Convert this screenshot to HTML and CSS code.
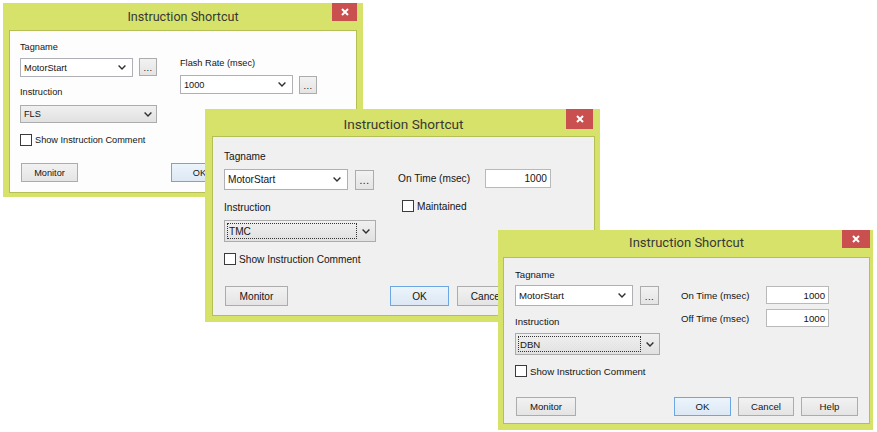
FILE: index.html
```html
<!DOCTYPE html>
<html lang="en">
<head>
<meta charset="utf-8">
<title>Instruction Shortcut dialogs</title>
<link rel="stylesheet" href="styles.css">
</head>
<body>
<div class="desk">

  <section class="dlg d1">
    <header class="tbar">
      <h1 class="ttl">Instruction Shortcut</h1>
      <button class="close" aria-label="Close"><svg viewBox="0 0 10 10"><path d="M2 2L8 8M8 2L2 8"/></svg></button>
    </header>
    <div class="client">
      <div class="top">
        <div class="col col-l">
          <div class="lbl">Tagname</div>
          <div class="row">
            <div class="combo tag"><span class="val">MotorStart</span><svg class="chev" viewBox="0 0 8 5"><path d="M0.6 0.6L4 4L7.4 0.6"/></svg></div>
            <button class="btn dots">...</button>
          </div>
          <div class="lbl lbl-ins">Instruction</div>
          <div class="combo list"><span class="val">FLS</span><span class="arr"><svg class="chev" viewBox="0 0 8 5"><path d="M0.6 0.6L4 4L7.4 0.6"/></svg></span></div>
        </div>
        <div class="col col-r">
          <div class="lbl">Flash Rate (msec)</div>
          <div class="row">
            <div class="combo tag"><span class="val">1000</span><svg class="chev" viewBox="0 0 8 5"><path d="M0.6 0.6L4 4L7.4 0.6"/></svg></div>
            <button class="btn dots">...</button>
          </div>
        </div>
      </div>
      <label class="chk"><span class="box"></span>Show Instruction Comment</label>
      <div class="btns">
        <button class="btn mon">Monitor</button>
        <button class="btn def">OK</button>
      </div>
    </div>
  </section>

  <section class="dlg d2">
    <header class="tbar">
      <h1 class="ttl">Instruction Shortcut</h1>
      <button class="close" aria-label="Close"><svg viewBox="0 0 10 10"><path d="M2 2L8 8M8 2L2 8"/></svg></button>
    </header>
    <div class="client">
      <div class="top">
        <div class="col col-l">
          <div class="lbl">Tagname</div>
          <div class="row">
            <div class="combo tag"><span class="val">MotorStart</span><svg class="chev" viewBox="0 0 8 5"><path d="M0.6 0.6L4 4L7.4 0.6"/></svg></div>
            <button class="btn dots">...</button>
          </div>
          <div class="lbl lbl-ins">Instruction</div>
          <div class="combo list focus"><span class="val">TMC</span><span class="arr"><svg class="chev" viewBox="0 0 8 5"><path d="M0.6 0.6L4 4L7.4 0.6"/></svg></span></div>
        </div>
        <div class="col col-r">
          <div class="fld"><span class="flbl">On Time (msec)</span><span class="inp">1000</span></div>
          <label class="chk maint"><span class="box"></span>Maintained</label>
        </div>
      </div>
      <label class="chk"><span class="box"></span>Show Instruction Comment</label>
      <div class="btns">
        <button class="btn mon">Monitor</button>
        <button class="btn def">OK</button>
        <button class="btn">Cancel</button>
      </div>
    </div>
  </section>

  <section class="dlg d3">
    <header class="tbar">
      <h1 class="ttl">Instruction Shortcut</h1>
      <button class="close" aria-label="Close"><svg viewBox="0 0 10 10"><path d="M2 2L8 8M8 2L2 8"/></svg></button>
    </header>
    <div class="client">
      <div class="top">
        <div class="col col-l">
          <div class="lbl">Tagname</div>
          <div class="row">
            <div class="combo tag"><span class="val">MotorStart</span><svg class="chev" viewBox="0 0 8 5"><path d="M0.6 0.6L4 4L7.4 0.6"/></svg></div>
            <button class="btn dots">...</button>
          </div>
          <div class="lbl lbl-ins">Instruction</div>
          <div class="combo list focus"><span class="val">DBN</span><span class="arr"><svg class="chev" viewBox="0 0 8 5"><path d="M0.6 0.6L4 4L7.4 0.6"/></svg></span></div>
        </div>
        <div class="col col-r">
          <div class="fld"><span class="flbl">On Time (msec)</span><span class="inp">1000</span></div>
          <div class="fld"><span class="flbl">Off Time (msec)</span><span class="inp">1000</span></div>
        </div>
      </div>
      <label class="chk"><span class="box"></span>Show Instruction Comment</label>
      <div class="btns">
        <button class="btn mon">Monitor</button>
        <button class="btn def">OK</button>
        <button class="btn">Cancel</button>
        <button class="btn">Help</button>
      </div>
    </div>
  </section>

</div>
</body>
</html>
```

FILE: styles.css
```css
* { box-sizing: border-box; }

html, body {
  margin: 0;
  background: #ffffff;
}

body {
  width: 877px;
  height: 432px;
  overflow: hidden;
  font-family: "Liberation Sans", Arial, sans-serif;
  color: #141414;
}

.desk {
  position: relative;
  width: 877px;
  height: 432px;
}

/* ---------- window frame ---------- */
.dlg {
  position: absolute;
  display: flex;
  flex-direction: column;
  background: #d7e26a;
  font-size: var(--fs);
}

.d1 { left: 3px;   top: 3px;   width: 360px; height: 194px; padding: 0 6px 4px 6px; --fs: 9.2px; z-index: 1; }
.d2 { left: 205px; top: 109px; width: 395px; height: 213px; padding: 0 5px 6px 7px; --fs: 10.15px; z-index: 2; }
.d3 { left: 498px; top: 230px; width: 375px; height: 200px; padding: 0 3px 6px 5px; --fs: 9.65px; z-index: 3; }

.tbar {
  height: 27px;
  flex: none;
  display: grid;
  grid-template-columns: 1fr auto 1fr;
  align-items: start;
}

.ttl {
  grid-column: 2;
  margin: 0;
  font-family: Roboto, "Noto Sans", sans-serif;
  font-weight: 400;
  line-height: 27px;
  color: #383838;
  white-space: nowrap;
}
.d1 .ttl { font-size: 12.6px; }
.d2 .ttl { font-size: 13.6px; margin-top: 2px; }
.d3 .ttl { font-size: 13px; line-height: 25px; }

.close {
  grid-column: 3;
  justify-self: end;
  padding: 0;
  border: 0;
  background: #c9504f;
  display: flex;
  align-items: center;
  justify-content: center;
}
.close svg { width: 10px; height: 10px; }
.close path { stroke: #ffffff; stroke-width: 2; fill: none; }
.d1 .close { width: 25px; height: 18px; }
.d2 .close { width: 27px; height: 20px; margin-right: 2px; }
.d3 .close { width: 28px; height: 18px; }

/* ---------- client area ---------- */
.client {
  flex: 1;
  display: flex;
  flex-direction: column;
  align-items: flex-start;
  border: 1px solid #b4bf55;
  background: #f0f0f0;
}
.d1 .client { background: #fdfdfd; padding: 10px 0 0 10px; }
.d2 .client { padding: 13px 11px 0 11px; }
.d3 .client { padding: 10px 11px 0 11px; }

.top { display: flex; align-items: flex-start; }
.col { display: flex; flex-direction: column; align-items: flex-start; }

.lbl { white-space: nowrap; }
.d1 .lbl { line-height: 13px; height: 13px; }
.d2 .lbl { line-height: 14px; height: 14px; }
.d3 .lbl { line-height: 13px; height: 13px; }

.row { display: flex; align-items: flex-start; }

/* combo boxes */
.combo {
  display: flex;
  align-items: center;
  white-space: nowrap;
}
.chev { width: 8px; height: 5px; flex: none; }
.chev path { fill: none; stroke: #303030; stroke-width: 1.4; }

.tag {
  justify-content: space-between;
  background: #ffffff;
  border: 1px solid #aeb0b6;
  padding: 0 6px 0 3px;
}

.list {
  align-items: stretch;
  background: linear-gradient(#f0f0f0, #e1e1e1);
  border: 1px solid #acacac;
}
.list .val {
  flex: 1;
  display: flex;
  align-items: center;
  padding-left: 3px;
}
.list.focus .val {
  margin: 2px 0 2px 2px;
  padding-left: 1px;
  border: 1px dotted #333333;
}
.list .arr {
  width: 18px;
  flex: none;
  display: flex;
  align-items: center;
  justify-content: center;
}

/* buttons */
.btn {
  font: inherit;
  color: #141414;
  padding: 0;
  border: 1px solid #acacac;
  background: linear-gradient(#f2f2f2, #e4e4e4);
  display: flex;
  align-items: center;
  justify-content: center;
  flex: none;
}
.btn.def {
  border-color: #6aa7e3;
  background: linear-gradient(#ecf4fc, #dce8f4);
}
.dots { line-height: 1; padding-top: 3px; letter-spacing: 0.5px; }

/* checkbox */
.chk {
  display: flex;
  align-items: center;
  gap: 3px;
  white-space: nowrap;
  height: 12px;
}
.box {
  width: 12px;
  height: 12px;
  flex: none;
  border: 1px solid #3a3a3a;
  background: #ffffff;
}

/* text fields */
.fld { display: grid; align-items: center; }
.flbl { white-space: nowrap; }
.inp {
  background: #ffffff;
  border: 1px solid #b9b9b9;
  text-align: right;
  padding-right: 3px;
  display: flex;
  align-items: center;
  justify-content: flex-end;
}

.btns { display: flex; align-items: flex-start; }
.btns .mon { margin-right: auto; }

/* ---------- dialog 1 metrics ---------- */
.d1 .row { margin-top: 4px; gap: 6px; }
.d1 .tag { width: 113px; height: 19px; }
.d1 .dots { width: 18px; height: 18px; }
.d1 .lbl-ins { margin-top: 9px; }
.d1 .list { margin-top: 6px; width: 137px; height: 18px; }
.d1 .list .arr { width: 16px; }
.d1 .col-r { margin-left: 23px; margin-top: 16px; }
.d1 .col-r .row { margin-top: 5px; }
.d1 .col-r .dots { margin-top: 1px; }
.d1 .chk { margin-top: 11px; }
.d1 .btns { margin-top: 17px; gap: 7px; width: 100%; padding-right: 128px; }
.d1 .btn:not(.dots) { width: 57px; height: 19px; }
.d1 .mon { margin-left: 1px; }

/* ---------- dialog 2 metrics ---------- */
.d2 .row { margin-top: 5px; gap: 7px; }
.d2 .tag { width: 124px; height: 21px; }
.d2 .dots { width: 19px; height: 20px; margin-top: 1px; }
.d2 .lbl-ins { margin-top: 11px; }
.d2 .list { margin-top: 5px; width: 152px; height: 22px; }
.d2 .col-r { margin-left: 22px; margin-top: 19px; }
.d2 .fld { grid-template-columns: 87px 66px; }
.d2 .inp { height: 19px; }
.d2 .maint { margin-top: 12px; margin-left: 4px; }
.d2 .client > .chk { margin-top: 11px; }
.d2 .btns { margin-top: 21px; gap: 8px; width: 100%; padding-right: 67px; }
.d2 .btn:not(.dots) { width: 59px; height: 20px; }
.d2 .btns .mon { width: 63px; margin-left: 1px; }

/* ---------- dialog 3 metrics ---------- */
.d3 .row { margin-top: 4px; gap: 7px; }
.d3 .tag { width: 118px; height: 21px; }
.d3 .dots { width: 19px; height: 19px; margin-top: 1px; }
.d3 .lbl-ins { margin-top: 9px; }
.d3 .list { margin-top: 5px; width: 145px; height: 22px; }
.d3 .col-r { margin-left: 21px; margin-top: 18px; display: grid; row-gap: 5px; }
.d3 .fld { grid-template-columns: 85px 63px; }
.d3 .inp { height: 18px; }
.d3 .client > .chk { margin-top: 10px; }
.d3 .btns { margin-top: 20px; gap: 7px; width: 100%; }
.d3 .btn:not(.dots) { width: 57px; height: 19px; }
.d3 .btns .mon { width: 60px; margin-left: 1px; }
.d3 .btns .btn:nth-child(3) { width: 56px; }
```
